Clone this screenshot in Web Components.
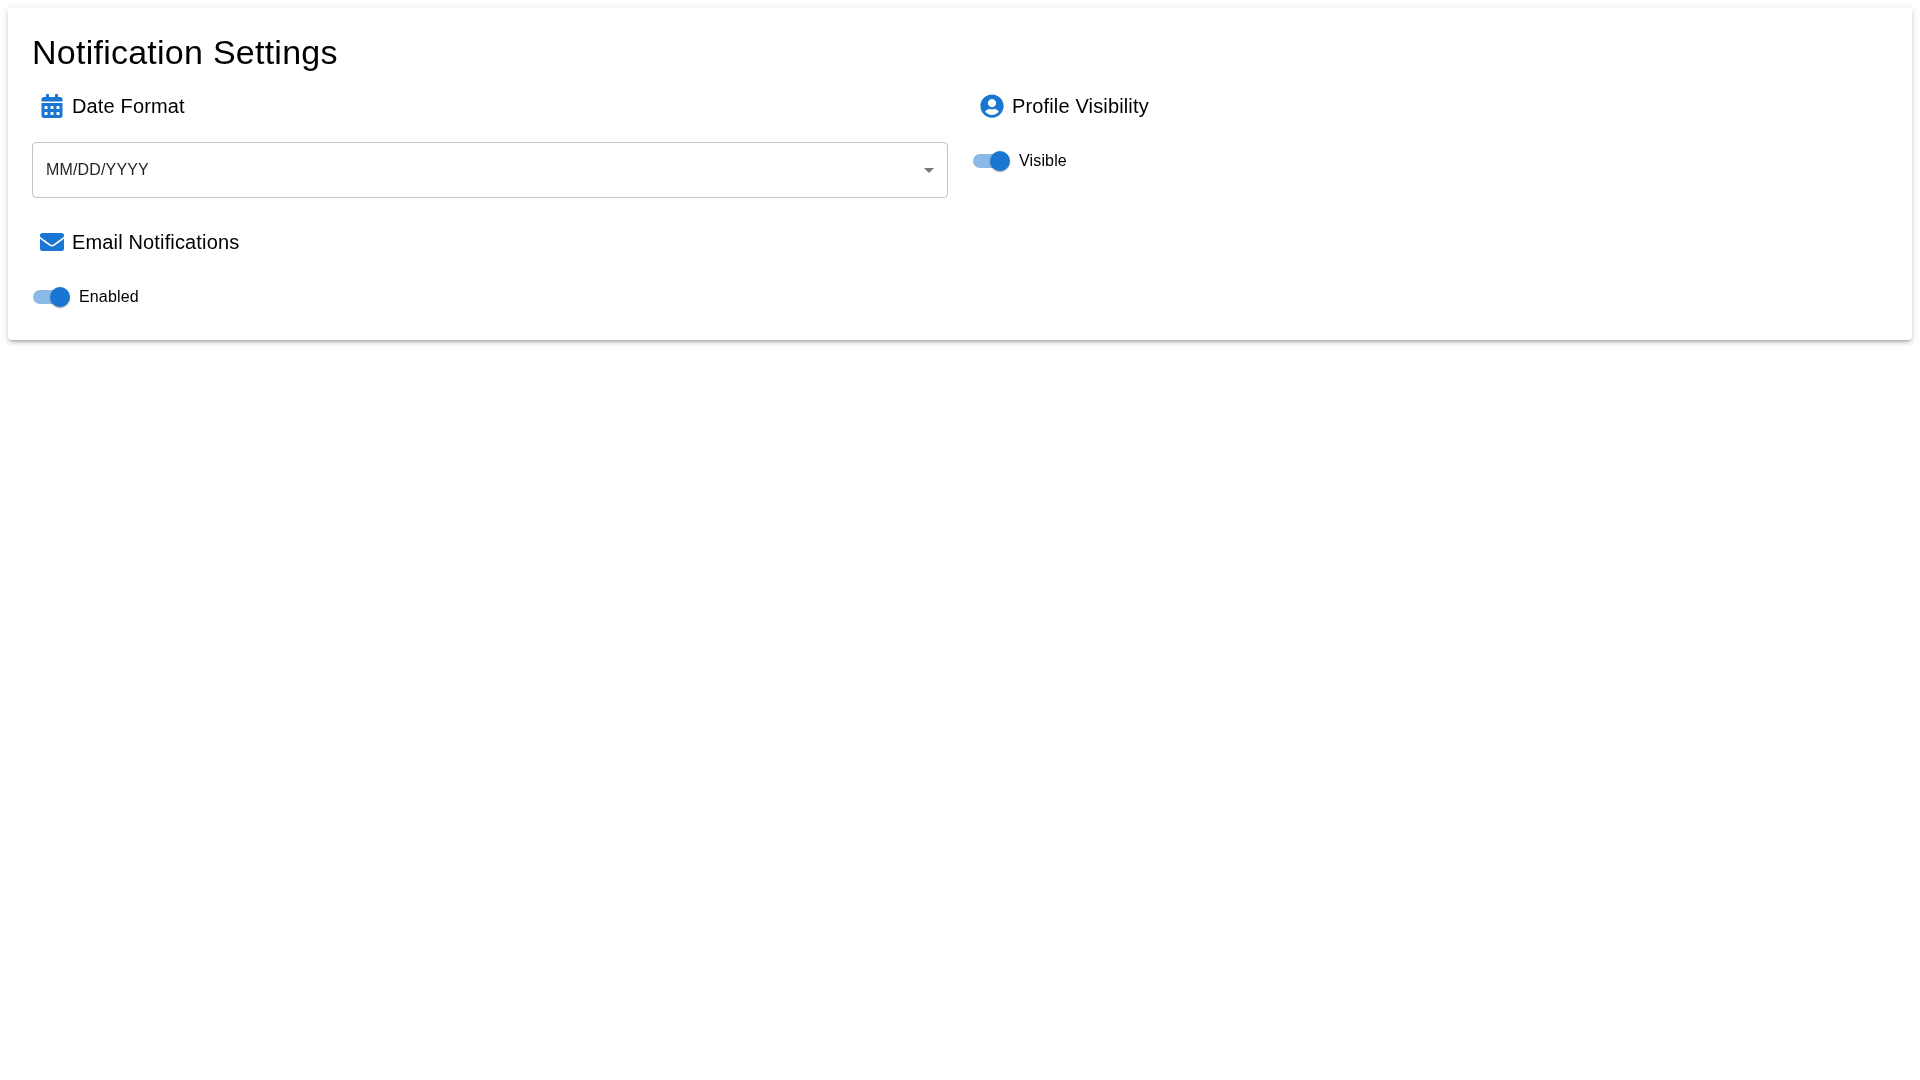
<!DOCTYPE html>
<html lang="en">
<head>
<meta charset="utf-8">
<title>Notification Settings</title>
<style>
html, body {
    margin: 0;
    min-height: 100vh;
}
body {
    box-sizing: border-box;
    padding: 8px;
    font-family: "Liberation Sans", Arial, sans-serif;
    color: rgba(0, 0, 0, 0.87);
}
</style>
</head>
<body>
<settings-card heading="Notification Settings">
    <setting-section icon="calendar" label="Date Format">
        <select-field value="MM/DD/YYYY"></select-field>
    </setting-section>
    <setting-section icon="user" label="Profile Visibility">
        <toggle-switch label="Visible" checked></toggle-switch>
    </setting-section>
    <setting-section icon="envelope" label="Email Notifications">
        <toggle-switch label="Enabled" checked></toggle-switch>
    </setting-section>
</settings-card>

<script>
const ICONS = {
    calendar: 'M0 464c0 26.5 21.5 48 48 48h352c26.5 0 48-21.5 48-48V192H0v272zm320-196c0-6.6 5.4-12 12-12h40c6.6 0 12 5.4 12 12v40c0 6.6-5.4 12-12 12h-40c-6.6 0-12-5.4-12-12v-40zm0 128c0-6.6 5.4-12 12-12h40c6.6 0 12 5.4 12 12v40c0 6.6-5.4 12-12 12h-40c-6.6 0-12-5.4-12-12v-40zM192 268c0-6.6 5.4-12 12-12h40c6.6 0 12 5.4 12 12v40c0 6.6-5.4 12-12 12h-40c-6.6 0-12-5.4-12-12v-40zm0 128c0-6.6 5.4-12 12-12h40c6.6 0 12 5.4 12 12v40c0 6.6-5.4 12-12 12h-40c-6.6 0-12-5.4-12-12v-40zM64 268c0-6.6 5.4-12 12-12h40c6.6 0 12 5.4 12 12v40c0 6.6-5.4 12-12 12H76c-6.6 0-12-5.4-12-12v-40zm0 128c0-6.6 5.4-12 12-12h40c6.6 0 12 5.4 12 12v40c0 6.6-5.4 12-12 12H76c-6.6 0-12-5.4-12-12v-40zM400 64h-48V16c0-8.8-7.2-16-16-16h-32c-8.8 0-16 7.2-16 16v48H160V16c0-8.8-7.2-16-16-16h-32c-8.8 0-16 7.2-16 16v48H48C21.5 64 0 85.5 0 112v48h448v-48c0-26.5-21.5-48-48-48z',
    user: 'M256 8C119 8 8 119 8 256s111 248 248 248 248-111 248-248S393 8 256 8zm0 96c48.6 0 88 39.4 88 88s-39.4 88-88 88-88-39.4-88-88 39.4-88 88-88zm0 344c-58.7 0-111.3-26.6-146.5-68.2 18.8-35.4 55.6-59.8 98.5-59.8 2.4 0 4.8.4 7.1 1.1 13 4.2 26.6 6.9 40.9 6.9 14.3 0 28-2.7 40.9-6.9 2.3-.7 4.7-1.1 7.1-1.1 42.9 0 79.7 24.4 98.5 59.8C367.3 421.4 314.7 448 256 448z',
    envelope: 'M502.3 190.8c3.9-3.1 9.7-.2 9.7 4.7V400c0 26.5-21.5 48-48 48H48c-26.5 0-48-21.5-48-48V195.6c0-5 5.7-7.8 9.7-4.7 22.4 17.4 52.1 39.5 154.1 113.6 21.1 15.4 56.7 47.8 92.2 47.6 35.7.3 72-32.8 92.3-47.6 102-74.1 131.6-96.3 154-113.7zM256 320c23.2.4 56.6-29.2 73.4-41.4 132.7-96.3 142.8-104.7 173.4-128.7 5.8-4.5 9.2-11.5 9.2-18.9v-19c0-26.5-21.5-48-48-48H48C21.5 64 0 85.5 0 112v19c0 7.4 3.4 14.3 9.2 18.9 30.6 23.9 40.7 32.4 173.4 128.7 16.8 12.2 50.2 41.8 73.4 41.4z'
};
const ICON_VIEWBOX = { calendar: '0 0 448 512', user: '0 0 512 512', envelope: '0 0 512 512' };

class SettingsCard extends HTMLElement {
    constructor() {
        super();
        this.attachShadow({mode: 'open'});
        this.shadowRoot.innerHTML = `
<style>
    :host {
        display: block;
    }
    .paper {
        box-sizing: border-box;
        padding: 24px;
        background: #fff;
        border-radius: 4px;
        filter: drop-shadow(0 0 0 transparent);
        box-shadow: 0px 3px 3px -2px rgba(0,0,0,0.2), 0px 3px 4px 0px rgba(0,0,0,0.14), 0px 1px 8px 0px rgba(0,0,0,0.12);
    }
    h1 {
        margin: 0 0 18px;
        font-size: 34px;
        font-weight: 400;
        line-height: 40px;
        letter-spacing: 0.25px;
        color: #000;
    }
    .grid {
        display: grid;
        grid-template-columns: 1fr 1fr;
        column-gap: 24px;
        row-gap: 28px;
        align-items: start;
    }
</style>
<div class="paper">
    <h1></h1>
    <div class="grid"><slot></slot></div>
</div>`;
        this.shadowRoot.querySelector('h1').textContent = this.getAttribute('heading');
    }
}

class SettingSection extends HTMLElement {
    constructor() {
        super();
        this.attachShadow({mode: 'open'});
        this.shadowRoot.innerHTML = `
<style>
    :host {
        display: block;
    }
    .head {
        display: flex;
        align-items: center;
        gap: 8px;
        height: 32px;
        padding-left: 8px;
        margin-bottom: 20px;
        font-size: 20px;
        line-height: 32px;
        letter-spacing: 0.15px;
        color: #000;
    }
    svg {
        width: 24px;
        height: 24px;
        fill: #1976d2;
        flex: none;
    }
</style>
<div class="head">
    <svg aria-hidden="true"><path></path></svg>
    <span></span>
</div>
<slot></slot>`;
        let icon = this.getAttribute('icon');
        this.shadowRoot.querySelector('svg').setAttribute('viewBox', ICON_VIEWBOX[icon]);
        this.shadowRoot.querySelector('path').setAttribute('d', ICONS[icon]);
        this.shadowRoot.querySelector('span').textContent = this.getAttribute('label');
    }
}

class SelectField extends HTMLElement {
    constructor() {
        super();
        this.attachShadow({mode: 'open'});
        this.shadowRoot.innerHTML = `
<style>
    :host {
        display: flex;
        align-items: center;
        justify-content: space-between;
        box-sizing: border-box;
        height: 56px;
        padding: 0 6px 0 13px;
        border: 1px solid rgba(0,0,0,.23);
        border-radius: 4px;
        font-size: 16px;
        letter-spacing: 0.15px;
        color: rgba(0,0,0,.87);
    }
    svg {
        width: 24px;
        height: 24px;
        fill: rgba(0,0,0,.54);
    }
</style>
<span></span>
<svg viewBox="0 0 24 24" aria-hidden="true"><path d="M7 10l5 5 5-5z"></path></svg>`;
        this.shadowRoot.querySelector('span').textContent = this.getAttribute('value');
    }
}

class ToggleSwitch extends HTMLElement {
    constructor() {
        super();
        this.attachShadow({mode: 'open'});
        this.shadowRoot.innerHTML = `
<style>
    :host {
        display: flex;
        align-items: center;
        height: 38px;
        margin-left: -11px;
        font-size: 16px;
        letter-spacing: 0.15px;
        color: #000;
    }
    .switch {
        box-sizing: border-box;
        width: 58px;
        height: 38px;
        padding: 12px;
        position: relative;
        flex: none;
    }
    .track {
        display: block;
        height: 14px;
        border-radius: 7px;
        background: #1976d2;
        opacity: .5;
    }
    .thumb {
        position: absolute;
        top: 9px;
        left: 29px;
        width: 20px;
        height: 20px;
        border-radius: 50%;
        background: #1976d2;
        box-shadow: 0 2px 1px -1px rgba(0,0,0,.2), 0 1px 1px 0 rgba(0,0,0,.14), 0 1px 3px 0 rgba(0,0,0,.12);
    }
</style>
<div class="switch"><span class="track"></span><span class="thumb"></span></div>
<span class="label"></span>`;
        this.shadowRoot.querySelector('.label').textContent = this.getAttribute('label');
    }
}

customElements.define('settings-card', SettingsCard);
customElements.define('setting-section', SettingSection);
customElements.define('select-field', SelectField);
customElements.define('toggle-switch', ToggleSwitch);
</script>
</body>
</html>
